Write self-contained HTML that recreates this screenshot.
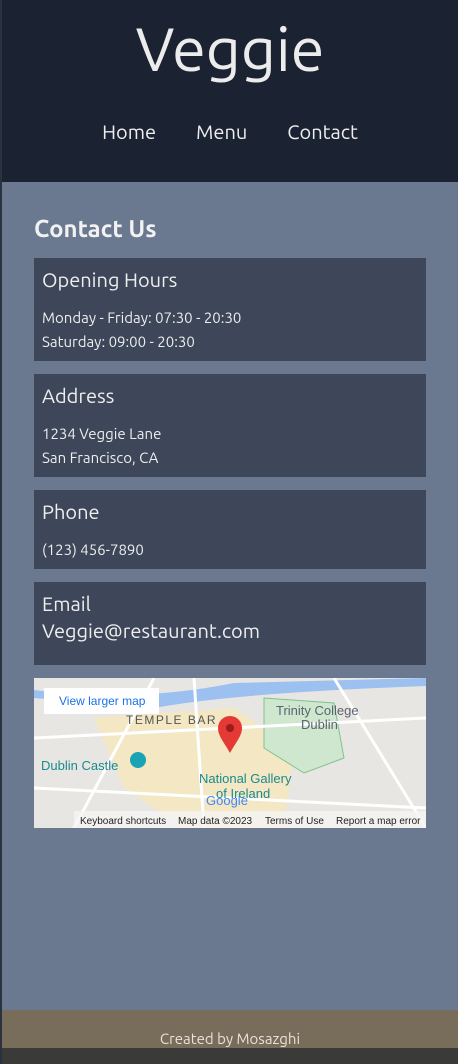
<!DOCTYPE html>
<html><head><style>
*{margin:0;padding:0;box-sizing:border-box}
body{width:458px;height:1064px;overflow:hidden;font-family:"Ubuntu","DejaVu Sans","Liberation Sans",sans-serif;color:#eee;background:#6c7a8e;position:relative}
.edge{position:absolute;left:0;top:0;width:2px;height:1064px;background:#2a3240}
header{position:absolute;left:2px;top:0;width:456px;height:182px;background:#1b2232}
h1{position:absolute;top:14px;width:100%;text-align:center;font-weight:400;font-size:61px;color:#ececec}
nav{position:absolute;top:120px;width:100%;text-align:center;font-size:20px}
nav span{margin:0 20px}
main{position:absolute;left:2px;top:182px;width:456px;height:828px;background:#6b7990}
h2{position:absolute;left:34px;top:215px;font-size:24px;font-weight:700;color:#f2f2f2}
.card{position:absolute;left:34px;width:392px;background:#3d4759;padding:10px 8px}
.card h3{font-weight:400;font-size:20px;margin-bottom:15px;margin-top:0}
.card p{font-size:15px;line-height:24px}
.map{position:absolute;left:34px;top:678px;width:392px;height:150px;background:#e5e3df;overflow:hidden}
footer{position:absolute;left:2px;top:1010px;width:456px;height:54px;background:#786d5a}
footer .low{position:absolute;left:0;top:38px;width:100%;height:16px;background:#3a3a38}
footer p{position:absolute;top:20px;width:100%;text-align:center;font-size:15px;color:#e8e2d8}
</style></head><body>
<div class="edge"></div>
<header><h1>Veggie</h1><nav><span>Home</span><span>Menu</span><span>Contact</span></nav></header>
<main></main>
<h2>Contact Us</h2>
<div class="card" style="top:258px;height:103px"><h3>Opening Hours</h3><p>Monday - Friday: 07:30 - 20:30<br>Saturday: 09:00 - 20:30</p></div>
<div class="card" style="top:374px;height:103px"><h3>Address</h3><p>1234 Veggie Lane<br>San Francisco, CA</p></div>
<div class="card" style="top:490px;height:79px"><h3>Phone</h3><p>(123) 456-7890</p></div>
<div class="card" style="top:582px;height:83px"><h3 style="margin-bottom:4px">Email</h3><p style="font-size:20px">Veggie@restaurant.com</p></div>
<div class="map">
<svg width="392" height="150" viewBox="0 0 392 150" font-family="Liberation Sans,sans-serif">
<rect width="392" height="150" fill="#e8e6e2"/>
<path d="M60 40 L200 30 L260 70 L250 150 L150 150 L90 110 Z" fill="#f3e7c4"/>
<path d="M230 20 L300 25 L310 80 L270 95 L230 70 Z" fill="#cfe6cf" stroke="#7fc48e"/>
<path d="M0 12 Q100 25 200 5 L392 0 L392 8 Q200 15 120 30 Q60 25 0 20Z" fill="#9cc0f0"/>
<path d="M0 60 L392 40 M40 150 L120 0 M0 110 L392 130 M300 0 L392 150 M160 0 L170 150" stroke="#fff" stroke-width="3"/>
<rect x="10" y="10" width="115" height="26" fill="#fff"/>
<text x="25" y="27" font-size="12" fill="#1a73e8">View larger map</text>
<text x="92" y="46" font-size="12" fill="#555" letter-spacing="1.5">TEMPLE BAR</text>
<text x="7" y="92" font-size="13" fill="#1a8a8f">Dublin Castle</text>
<circle cx="104" cy="82" r="8" fill="#1aa3b4"/>
<text x="242" y="37" font-size="13" fill="#5a6470">Trinity College</text>
<text x="267" y="51" font-size="13" fill="#5a6470">Dublin</text>
<text x="165" y="105" font-size="13" fill="#1a8a8f">National Gallery</text>
<text x="182" y="120" font-size="13" fill="#1a8a8f">of Ireland</text>
<path d="M196 75 C190 64 184 58 184 50 A12 12 0 0 1 208 50 C208 58 202 64 196 75Z" fill="#e53935"/>
<circle cx="196" cy="50" r="4" fill="#9b1a1a"/>
<text x="172" y="127" font-size="13" fill="#4285f4">Google</text>
<rect x="40" y="133" width="352" height="17" fill="rgba(245,245,245,.8)"/>
<text x="46" y="146" font-size="10" fill="#222">Keyboard shortcuts</text>
<text x="144" y="146" font-size="10" fill="#222">Map data ©2023</text>
<text x="231" y="146" font-size="10" fill="#222">Terms of Use</text>
<text x="302" y="146" font-size="10" fill="#222">Report a map error</text>
</svg></div>
<footer><div class="low"></div><p>Created by Mosazghi</p></footer>
</body></html>
